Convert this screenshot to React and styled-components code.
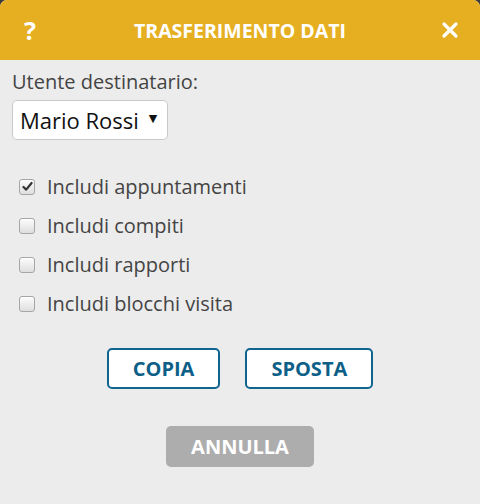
import React, { useState } from 'react';
import styled, { createGlobalStyle } from 'styled-components';

const GlobalStyle = createGlobalStyle`
  html, body {
    margin: 0;
    padding: 0;
    background: #3a3a3a;
  }
  body {
    font-family: "Open Sans", "Liberation Sans", sans-serif;
  }
`;

const options = [
  { id: 'app', label: 'Includi appuntamenti', checked: true },
  { id: 'comp', label: 'Includi compiti', checked: false },
  { id: 'rap', label: 'Includi rapporti', checked: false },
  { id: 'bv', label: 'Includi blocchi visita', checked: false }
];

function App() {
  const [checks, setChecks] = useState(options.map(o => o.checked));

  const toggle = (i) => {
    setChecks(prev => prev.map((c, j) => (j === i ? !c : c)));
  };

  return (
    <>
      <GlobalStyle />
      <DialogStyled>
        <Header>
          <HeaderIcon>?</HeaderIcon>
          <Title>TRASFERIMENTO DATI</Title>
          <HeaderIcon>
            <svg width="18" height="18" viewBox="0 0 18 18">
              <path d="M3 3 L15 15 M15 3 L3 15" stroke="#fff" strokeWidth="3.2" strokeLinecap="round" />
            </svg>
          </HeaderIcon>
        </Header>

        <Body>
          <FieldLabel>Utente destinatario:</FieldLabel>
          <Select>
            <span>Mario Rossi</span>
            <Caret>▼</Caret>
          </Select>

          <CheckList>
            {options.map((o, i) => (
              <CheckRow key={o.id} onClick={() => toggle(i)}>
                <Box $checked={checks[i]}>
                  {checks[i] && (
                    <svg width="11" height="11" viewBox="0 0 11 11">
                      <path d="M1.5 6 L4.2 8.6 L9.6 2" fill="none" stroke="#333" strokeWidth="2.2" strokeLinecap="round" strokeLinejoin="round" />
                    </svg>
                  )}
                </Box>
                <span>{o.label}</span>
              </CheckRow>
            ))}
          </CheckList>

          <ButtonRow>
            <OutlineButton>COPIA</OutlineButton>
            <OutlineButton>SPOSTA</OutlineButton>
          </ButtonRow>

          <CancelButton>ANNULLA</CancelButton>
        </Body>
      </DialogStyled>
    </>
  );
}

const DialogStyled = styled.div`
  width: 480px;
  height: 504px;
  background: #ececec;
  border-radius: 7px 7px 0 0;
  overflow: hidden;
  display: flex;
  flex-direction: column;
`;

const Header = styled.div`
  height: 60px;
  background: #e6af22;
  display: flex;
  align-items: center;
  justify-content: space-between;
  padding: 0 20px 0 20px;
  box-sizing: border-box;
`;

const HeaderIcon = styled.div`
  width: 20px;
  display: flex;
  align-items: center;
  justify-content: center;
  color: #fff;
  font-weight: 700;
  font-size: 25px;
  line-height: 1;
`;

const Title = styled.h1`
  margin: 0;
  color: #fff;
  font-size: 19.5px;
  font-weight: 700;
  letter-spacing: 0;
`;

const Body = styled.div`
  padding: 9px 12px 0;
  display: flex;
  flex-direction: column;
  align-items: flex-start;
`;

const FieldLabel = styled.label`
  font-size: 20px;
  line-height: 26px;
  color: #444;
`;

const Select = styled.div`
  margin-top: 5px;
  height: 40px;
  box-sizing: border-box;
  padding: 0 10px 0 7px;
  display: flex;
  align-items: center;
  gap: 10px;
  background: #fff;
  border: 1.5px solid #c9c9c9;
  border-radius: 5px;
  font-size: 22px;
  color: #111;
`;

const Caret = styled.span`
  font-size: 11px;
  color: #111;
  font-family: "DejaVu Sans", sans-serif;
  margin-top: -4px;
`;

const CheckList = styled.div`
  margin-top: 27px;
  display: flex;
  flex-direction: column;
`;

const CheckRow = styled.div`
  height: 39px;
  display: flex;
  align-items: center;
  gap: 12px;
  padding-left: 7px;
  font-size: 20px;
  color: #444;
  cursor: pointer;
`;

const Box = styled.span`
  width: 14px;
  height: 14px;
  border: 1px solid #a6a6a6;
  border-radius: 3px;
  background: linear-gradient(#fcfcfc, #dedede);
  display: flex;
  align-items: center;
  justify-content: center;
  box-shadow: inset 0 1px 0 #fff;
`;

const ButtonRow = styled.div`
  align-self: center;
  margin-top: 25px;
  display: flex;
  gap: 25px;
`;

const OutlineButton = styled.button`
  height: 41px;
  padding: 0 24px;
  background: #fff;
  border: 2px solid #0f6590;
  border-radius: 5px;
  color: #0d5f87;
  font-family: "Open Sans", sans-serif;
  font-weight: 700;
  font-size: 20px;
  cursor: pointer;
`;

const CancelButton = styled.button`
  align-self: center;
  margin-top: 37px;
  height: 41px;
  padding: 0 25px;
  background: #adadad;
  border: none;
  border-radius: 5px;
  color: #fff;
  font-family: "Open Sans", sans-serif;
  font-weight: 700;
  font-size: 20px;
  cursor: pointer;
`;

export default App;
